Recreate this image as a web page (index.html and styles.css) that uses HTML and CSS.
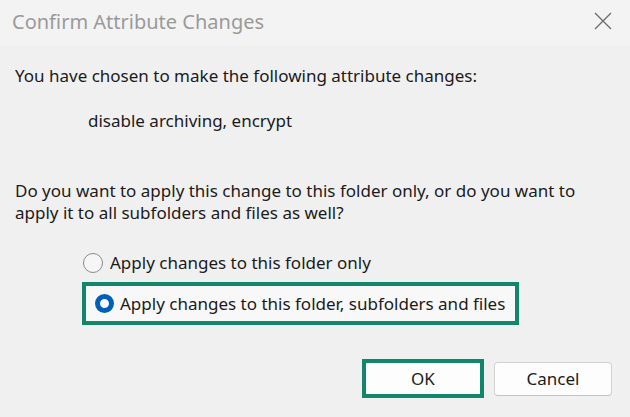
FILE: index.html
```html
<!DOCTYPE html>
<html>
<head>
<meta charset="utf-8">
<link rel="stylesheet" href="styles.css">
</head>
<body>
<div class="dialog">
  <div class="titlebar">
    <span class="title">Confirm Attribute Changes</span>
    <svg class="close" width="18" height="18" viewBox="0 0 18 18"><path d="M1 1 L17 17 M17 1 L1 17" stroke="#6b6b6b" stroke-width="1.3" fill="none"/></svg>
  </div>
  <div class="content">
    <p class="line">You have chosen to make the following attribute changes:</p>
    <p class="line changes">disable archiving, encrypt</p>
    <p class="line question">Do you want to apply this change to this folder only, or do you want to apply it to all subfolders and files as well?</p>
    <div class="options">
      <label class="option">
        <span class="radio"></span>
        <span class="opt-text">Apply changes to this folder only</span>
      </label>
      <label class="option selected">
        <span class="radio on"></span>
        <span class="opt-text">Apply changes to this folder, subfolders and files</span>
      </label>
    </div>
  </div>
  <div class="buttons">
    <button class="btn ok">OK</button>
    <button class="btn cancel">Cancel</button>
  </div>
</div>
</body>
</html>
```
FILE: styles.css
```css
html, body {
  margin: 0;
  padding: 0;
}
body {
  width: 630px;
  height: 417px;
  background: #f0f0f0;
  font-family: "Noto Sans", "Open Sans", sans-serif;
  color: #1b1b1b;
  overflow: hidden;
}
.dialog {
  display: flex;
  flex-direction: column;
  height: 417px;
}
.titlebar {
  height: 46px;
  background: #f3f3f3;
  display: flex;
  align-items: center;
  justify-content: space-between;
  padding: 0 18px 4px 12px;
  box-sizing: border-box;
}
.title {
  font-size: 20px;
  color: #9a9a9a;
}
.close {
  display: block;
}
.content {
  padding: 19px 15px 0 15px;
}
.line {
  margin: 0;
  font-size: 17px;
  line-height: 22px;
}
.changes {
  margin-top: 23px;
  padding-left: 73px;
}
.question {
  margin-top: 48px;
  width: 598px;
}
.options {
  display: flex;
  flex-direction: column;
  align-items: flex-start;
  margin-top: 28px;
  margin-left: 68px;
  gap: 8px;
}
.option {
  display: flex;
  align-items: center;
  gap: 7px;
  font-size: 17px;
  line-height: 22px;
}
.option.selected {
  margin-left: -1px;
  border: 4px solid #12866a;
  background: #f8f8f8;
  width: 437px;
  height: 43px;
  box-sizing: border-box;
  padding-left: 9px;
  gap: 6px;
}
.radio {
  width: 20px;
  height: 20px;
  border-radius: 50%;
  border: 1.5px solid #8a8a8a;
  box-sizing: border-box;
  background: #f6f6f6;
  flex: none;
}
.radio.on {
  width: 19px;
  height: 19px;
  border: 5.5px solid #005fb8;
  background: #ffffff;
}
.buttons {
  display: flex;
  justify-content: flex-end;
  align-items: center;
  gap: 10px;
  padding-right: 18px;
  margin-top: 34px;
}
.btn {
  font-family: "Noto Sans", "Open Sans", sans-serif;
  font-size: 17px;
  color: #1b1b1b;
  background: #fdfdfd;
  box-sizing: border-box;
  padding: 0;
}
.ok {
  width: 122px;
  height: 39px;
  border: 4px solid #12866a;
  border-radius: 0;
}
.cancel {
  width: 118px;
  height: 34px;
  border: 1px solid #d2d2d2;
  border-bottom-color: #c4c4c4;
  border-radius: 4px;
}
```
